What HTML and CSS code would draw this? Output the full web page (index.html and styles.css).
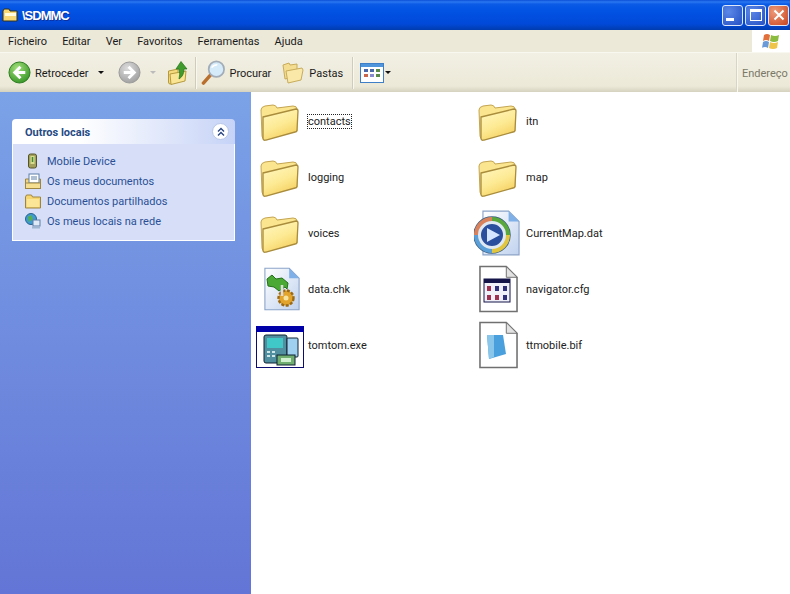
FILE: index.html
```html
<!DOCTYPE html>
<html lang="pt">
<head>
<meta charset="utf-8">
<title>\SDMMC</title>
<link rel="stylesheet" href="styles.css">
</head>
<body>
<svg class="defs" width="0" height="0" aria-hidden="true">
  <defs>
    <linearGradient id="fold" x1="0" y1="0" x2="0.5" y2="1"><stop offset="0" stop-color="#fff8c4"/><stop offset=".6" stop-color="#fdea94"/><stop offset="1" stop-color="#f6d264"/></linearGradient>
    <linearGradient id="page" x1="0" y1="0" x2="1" y2="1"><stop offset="0" stop-color="#ffffff"/><stop offset="1" stop-color="#c0d2ee"/></linearGradient>
    <radialGradient id="green" cx="0.4" cy="0.3" r="0.8"><stop offset="0" stop-color="#a4e07c"/><stop offset="1" stop-color="#2c8f1e"/></radialGradient>
    <radialGradient id="grey" cx="0.4" cy="0.3" r="0.8"><stop offset="0" stop-color="#dcdcdc"/><stop offset="1" stop-color="#9a9a9a"/></radialGradient>
    <symbol id="folder" viewBox="0 0 40 40">
      <path d="M1 9 Q1 6 5 5 L13 4 Q16 4 17 7 L33 5 Q37 5 37 8 L37 30 L5 38 Q2 38 2 35 Z" fill="#fbe58e" stroke="#c4a552" stroke-width="1"/>
      <path d="M3 16 L36 8 Q38 8 38 10 L37 29 Q37 31 35 31 L6 39 Q3 40 3 37 Z" fill="url(#fold)" stroke="#a98c3c" stroke-width="1.3"/>
    </symbol>
    <symbol id="sheet" viewBox="0 0 40 48">
      <path d="M1 1 H28 L39 12 V47 H1 Z" fill="#fff" stroke="#707070" stroke-width="1.6"/>
      <path d="M28 1 V12 H39 Z" fill="#e2e2e2" stroke="#707070"/>
    </symbol>
    <symbol id="bluesheet" viewBox="0 0 40 48">
      <path d="M1 1 H28 L39 12 V47 H1 Z" fill="url(#page)" stroke="#8aa3c8" stroke-width="1.2"/>
      <path d="M28 1 V12 H39 Z" fill="#7fb0e8"/>
    </symbol>
  </defs>
</svg>

<header class="titlebar">
  <svg class="title-icon" viewBox="0 0 16 14" width="16" height="14"><path d="M1 3 L2 1 H7 L8 3 H15 V13 H1 Z" fill="#f7d774" stroke="#33301a"/><path d="M3 5 H14 V8 H3 Z" fill="#fffbe0"/></svg>
  <span class="title-text">\SDMMC</span>
  <div class="winbtns">
    <span class="winbtn"><i class="min"></i></span>
    <span class="winbtn"><i class="max"></i></span>
    <span class="winbtn close">
      <svg viewBox="0 0 12 12" width="12" height="12"><path d="M1.5 1.5 L10.5 10.5 M10.5 1.5 L1.5 10.5" stroke="#fff" stroke-width="2"/></svg>
    </span>
  </div>
</header>

<nav class="menubar">
  <ul class="menu">
    <li>Ficheiro</li><li>Editar</li><li>Ver</li><li>Favoritos</li><li>Ferramentas</li><li>Ajuda</li>
  </ul>
  <div class="flagbox">
    <svg viewBox="0 0 20 18" width="20" height="18">
      <path d="M3 3 Q6 1 9 3 L8 9 Q5 7 2 9 Z" fill="#e2703c"/>
      <path d="M10 3 Q14 5 18 3 L17 9 Q13 11 9 9 Z" fill="#8bbc3f"/>
      <path d="M2 10 Q5 8 8 10 L7 16 Q4 14 1 16 Z" fill="#6a9ad8"/>
      <path d="M9 10 Q13 12 17 10 L16 16 Q12 18 8 16 Z" fill="#eec54a"/>
    </svg>
  </div>
</nav>

<div class="toolbar">
  <div class="tools">
    <button class="tool back">
      <svg viewBox="0 0 24 24" width="23" height="23"><circle cx="12" cy="12" r="11" fill="url(#green)" stroke="#2a7a1e"/><path d="M13 6 L7 12 L13 18 M7 12 H18" fill="none" stroke="#fff" stroke-width="3"/></svg>
      <span>Retroceder</span><i class="caret"></i>
    </button>
    <button class="tool fwd">
      <svg viewBox="0 0 24 24" width="23" height="23"><circle cx="12" cy="12" r="11" fill="url(#grey)" stroke="#999"/><path d="M11 6 L17 12 L11 18 M17 12 H6" fill="none" stroke="#fff" stroke-width="3"/></svg>
      <i class="caret off"></i>
    </button>
    <button class="tool up">
      <svg viewBox="0 0 20 24" width="20" height="24"><path d="M0.5 10 L10 8 V21 L2 23 Q.5 23 .5 21 Z" fill="#f5da7e" stroke="#b59a3e"/><path d="M2 13 L18 10 L17 20 L3 23.5 Z" fill="#f9e594" stroke="#b59a3e"/><path d="M13 .5 L19 8 H16 Q16 15 11 18 Q12.5 13 11 8 H8 Z" fill="#3f9c2c" stroke="#24701a" stroke-width=".7"/></svg>
    </button>
    <span class="sep"></span>
    <button class="tool search">
      <svg viewBox="0 0 26 26" width="25" height="25"><path d="M2.5 24 L10 15.5" stroke="#b9702e" stroke-width="3.6" stroke-linecap="round"/><circle cx="16" cy="9.5" r="8" fill="#d6ebfa" stroke="#a2adb8" stroke-width="1.8"/><path d="M11 8 Q13 5 17 5" stroke="#fff" stroke-width="1.5" fill="none"/></svg>
      <span>Procurar</span>
    </button>
    <button class="tool folders">
      <svg viewBox="0 0 22 22" width="22" height="22"><path d="M1 3 L7 1 L8 3 L15 2 V14 L3 17 Z" fill="#f4dc90" stroke="#c8ac5c"/><path d="M4 9 L20 6 L21 8 L19 18 L6 21 Z" fill="#f9e8a8" stroke="#c8ac5c"/></svg>
      <span>Pastas</span>
    </button>
    <span class="sep sep-wide"></span>
    <button class="tool views">
      <svg viewBox="0 0 24 20" width="24" height="20"><rect x=".5" y=".5" width="23" height="19" fill="#fff" stroke="#3f7fc8"/><rect x="1" y="1" width="22" height="3" fill="#4f95dc"/><g fill="#4a68a8"><rect x="4" y="6" width="4" height="3"/><rect x="10" y="6" width="4" height="3"/></g><rect x="16" y="6" width="4" height="3" fill="#5a8a4a"/><rect x="4" y="11" width="4" height="3" fill="#c9674a"/><rect x="10" y="11" width="4" height="3" fill="#8a8ad0"/><rect x="16" y="11" width="4" height="3" fill="#5a8a4a"/></svg>
      <i class="caret"></i>
    </button>
  </div>
  <div class="address">Endereço</div>
</div>

<div class="main">
  <aside class="sidebar">
    <section class="panel">
      <div class="panel-head">
        <span>Outros locais</span>
        <span class="collapse"><svg viewBox="0 0 10 10" width="10" height="10"><path d="M2 4.5 L5 1.5 L8 4.5 M2 8.5 L5 5.5 L8 8.5" fill="none" stroke="#27457f" stroke-width="1.4"/></svg></span>
      </div>
      <ul class="panel-body">
        <li><svg viewBox="0 0 16 16" width="16" height="16"><rect x="3.5" y="1" width="8" height="14" rx="2" fill="#a3a05c" stroke="#55532a"/><rect x="5.5" y="3" width="4" height="8" fill="#d5dd8c"/><path d="M7.5 4 V9" stroke="#3d8a3d" stroke-width="1.5"/></svg>Mobile Device</li>
        <li><svg viewBox="0 0 16 16" width="16" height="16"><path d="M.5 6 H15.5 V15.5 H.5 Z" fill="#f3d67e" stroke="#9e8540"/><rect x="4" y="1" width="10" height="9" fill="#fff" stroke="#5f7fa8"/><path d="M6 4 H12 M6 6 H12" stroke="#5f7fa8"/><rect x=".5" y="10" width="15" height="5.5" fill="#f6de90" stroke="#9e8540"/></svg>Os meus documentos</li>
        <li><svg viewBox="0 0 16 16" width="16" height="16"><path d="M.5 4 L1.5 2 H6.5 L7.5 4 H15.5 V15 H.5 Z" fill="#f6d670" stroke="#9e8540"/><rect x="2" y="6" width="12" height="8" fill="#fbe596"/></svg>Documentos partilhados</li>
        <li><svg viewBox="0 0 16 16" width="16" height="16"><circle cx="6" cy="6" r="5.5" fill="#3f9ad0" stroke="#26628c"/><path d="M3 4 L6 2 L8 6 L4 9 Z" fill="#57b04a"/><rect x="8" y="7" width="7" height="6" fill="#dfe8f5" stroke="#5f7fa8"/><rect x="7" y="13.5" width="8" height="2" fill="#9fb5d0"/></svg>Os meus locais na rede</li>
      </ul>
    </section>
  </aside>

  <main class="files">
    <div class="file focus"><span class="ico"><svg width="40" height="40"><use href="#folder"/></svg></span><span class="name">contacts</span></div>
    <div class="file"><span class="ico"><svg width="40" height="40"><use href="#folder"/></svg></span><span class="name">itn</span></div>
    <div class="file"><span class="ico"><svg width="40" height="40"><use href="#folder"/></svg></span><span class="name">logging</span></div>
    <div class="file"><span class="ico"><svg width="40" height="40"><use href="#folder"/></svg></span><span class="name">map</span></div>
    <div class="file"><span class="ico"><svg width="40" height="40"><use href="#folder"/></svg></span><span class="name">voices</span></div>
    <div class="file"><span class="ico">
      <svg width="48" height="48" viewBox="0 0 48 48"><use href="#bluesheet" x="8" y="1" width="38" height="46"/><circle cx="18" cy="26" r="18" fill="#dfe9f2" stroke="#3d5f80" stroke-width="1.5"/><path d="M18 10 A16 16 0 0 1 34 26" fill="none" stroke="#58a83c" stroke-width="4"/><path d="M2 26 A16 16 0 0 1 18 10" fill="none" stroke="#d9825c" stroke-width="4"/><path d="M34 26 A16 16 0 0 1 18 42" fill="none" stroke="#e2c640" stroke-width="4"/><path d="M18 42 A16 16 0 0 1 2 26" fill="none" stroke="#5a9fd8" stroke-width="4"/><circle cx="18" cy="26" r="12" fill="#2a4f9c" stroke="#dfe9f2" stroke-width="2"/><path d="M13 19 L26 26 L13 33 Z" fill="#d6e6ff"/></svg>
    </span><span class="name">CurrentMap.dat</span></div>
    <div class="file"><span class="ico">
      <svg width="48" height="48" viewBox="0 0 48 48"><use href="#bluesheet" x="8" y="1" width="36" height="46"/><path d="M16 10 L11 14 L12 21 L18 22 L23 26 L29 22 L31 24 L32 18 L26 13 L20 14 Z" fill="#4aa834" stroke="#24701a"/><circle cx="30" cy="33" r="7.5" fill="#e2a42c" stroke="#9c6a14" stroke-width="2.4" stroke-dasharray="3 1.5"/><circle cx="30" cy="33" r="2.5" fill="#f7e4a0"/><path d="M26 20 V31" stroke="#ddd" stroke-width="2.5"/></svg>
    </span><span class="name">data.chk</span></div>
    <div class="file"><span class="ico">
      <svg width="48" height="48" viewBox="0 0 48 48"><use href="#sheet" x="5" y="0" width="39" height="48"/><rect x="10" y="14" width="26" height="23" fill="#f0f0f8" stroke="#15154a"/><rect x="10" y="14" width="26" height="4" fill="#15154a"/><g fill="#a03050"><rect x="13" y="21" width="4" height="5"/><rect x="13" y="30" width="4" height="5"/><rect x="21" y="30" width="4" height="5"/></g><g fill="#30307a"><rect x="21" y="21" width="4" height="5"/><rect x="29" y="21" width="4" height="5"/><rect x="29" y="30" width="4" height="5"/></g></svg>
    </span><span class="name">navigator.cfg</span></div>
    <div class="file exe"><span class="ico">
      <svg width="48" height="42" viewBox="0 0 48 42"><rect x=".5" y=".5" width="47" height="41" fill="#fff" stroke="#0b0b70"/><rect x="0" y="0" width="48" height="6" fill="#0000a8"/><rect x="8" y="9" width="23" height="28" rx="2" fill="#4f8f9f" stroke="#123"/><rect x="11" y="12" width="16" height="10" fill="#40c8c8"/><g fill="#cfe6e6"><rect x="11" y="25" width="3" height="2"/><rect x="16" y="25" width="3" height="2"/><rect x="11" y="29" width="3" height="2"/><rect x="16" y="29" width="3" height="2"/></g><rect x="31" y="12" width="11" height="19" rx="1" fill="#9fd0f0" stroke="#123"/><rect x="21" y="29" width="18" height="10" fill="#6fae6f" stroke="#123"/><rect x="25" y="32" width="10" height="4" fill="#d0f0d0"/></svg>
    </span><span class="name">tomtom.exe</span></div>
    <div class="file"><span class="ico">
      <svg width="48" height="48" viewBox="0 0 48 48"><use href="#sheet" x="5" y="0" width="39" height="48"/><path d="M13 14 H29 L32 33 L15 38 Z" fill="#4aa0dc"/><path d="M13 14 H20 L20 36 L15 38 Z" fill="#8ac6ea"/></svg>
    </span><span class="name">ttmobile.bif</span></div>
  </main>
</div>
</body>
</html>
```

FILE: styles.css
```css
* { box-sizing: border-box; }
html, body { margin: 0; height: 100%; }
body {
  width: 790px; height: 594px; overflow: hidden;
  display: flex; flex-direction: column;
  font: 11px Roboto, "Liberation Sans", sans-serif;
  color: #222; background: #fff;
}
.defs { position: absolute; }

.titlebar {
  height: 30px; flex: none;
  display: flex; align-items: center;
  padding: 0 1px 0 1px;
  background: linear-gradient(#0a4fd8 0, #2b78f0 2px, #0b5be6 4px, #0253e4 10px, #0149d8 24px, #0140bc 28px, #003cb0 30px);
}
.title-icon { margin: 0 4px 0 1px; }
.title-text { color: #fff; font: bold 13px "Liberation Sans", sans-serif; letter-spacing: -1px; text-shadow: 1px 1px #0f2f9c; flex: 1; }
.winbtns { display: flex; gap: 2px; }
.winbtn {
  width: 21px; height: 21px; border: 1px solid #dfe8fb; border-radius: 3px;
  display: flex; align-items: center; justify-content: center;
  background: radial-gradient(circle at 30% 30%, #5c88e8, #2450c4);
}
.winbtn.close { background: radial-gradient(circle at 30% 30%, #ee9a78, #c84420); }
.min { width: 8px; height: 3px; background: #fff; margin-top: 9px; margin-right: 5px; }
.max { width: 12px; height: 12px; border: 1px solid #fff; border-top-width: 3px; }

.menubar {
  height: 23px; flex: none;
  display: flex; justify-content: space-between;
  background: #ece9d8; border-bottom: 1px solid #f8f7f0;
}
.menu { list-style: none; margin: 0; padding: 0 0 0 8px; display: flex; align-items: center; gap: 15.2px; color: #1a1a1a; }
.flagbox { width: 38px; background: #fff; display: flex; align-items: center; justify-content: center; }

.toolbar {
  height: 39px; flex: none;
  display: flex; justify-content: space-between;
  background: linear-gradient(#f2f0e4, #ece9d8 85%, #d6d2c0);
}
.tools { display: flex; align-items: center; padding-left: 8px; }
.tool { display: flex; align-items: center; gap: 4px; padding: 0; border: 0; background: none; font: inherit; color: #1a1a1a; }
.tool span { padding-top: 2px; }
.caret { width: 0; height: 0; border: 3px solid transparent; border-top: 3px solid #111; border-bottom: 0; }
.caret.off { border-top-color: #bbb; }
.back .caret { margin-left: 6px; }
.fwd { margin-left: 14px; }
.fwd .caret { margin-left: 5px; }
.up { margin-left: 12px; }
.sep { width: 1px; height: 32px; background: #cfccba; box-shadow: 1px 0 #f8f7f0; margin-left: 7px; }
.sep-wide { margin-left: 9px; }
.search { margin-left: 5px; gap: 3px; }
.folders { margin-left: 11px; gap: 5px; }
.views { margin-left: 7px; gap: 1px; }
.address {
  width: 53px; display: flex; align-items: center; padding: 2px 0 0 4px; overflow: hidden; white-space: nowrap;
  color: #7a7868; border-left: 1px solid #f8f7f0; box-shadow: -1px 0 #d8d5c4;
}

.main { flex: 1; display: flex; min-height: 0; }
.sidebar {
  width: 251px; flex: none; padding: 27px 16px 0 12px;
  background: linear-gradient(#7ba2e7, #6375d6);
}
.panel-head {
  height: 25px; padding: 2px 6px 0 13px;
  display: flex; align-items: center; justify-content: space-between;
  font-weight: 700; color: #264a84;
  border-radius: 4px 4px 0 0;
  background: linear-gradient(90deg, #fff 30%, #c6d3f7);
}
.collapse {
  width: 17px; height: 17px; border-radius: 50%; background: #fff; border: 1px solid #b8c6e8;
  display: flex; align-items: center; justify-content: center; margin-top: -2px;
}
.panel-body {
  list-style: none; margin: 0; padding: 7px 0 9px 12px;
  background: #d6dff7; border: 1px solid #fff; border-top: 0;
  color: #2b4f96;
}
.panel-body li { height: 20px; display: flex; align-items: center; gap: 6px; }

.files {
  flex: 1; padding: 1px 0 0 5px;
  display: grid; grid-template-columns: 218px 218px; grid-auto-rows: 56px; align-content: start;
  color: #222;
}
.file { display: flex; align-items: center; gap: 4px; }
.ico { width: 48px; height: 48px; flex: none; display: flex; align-items: center; justify-content: center; }
.exe .ico { padding-top: 4px; }
.focus .name { outline: 1px dotted #222; }
```
